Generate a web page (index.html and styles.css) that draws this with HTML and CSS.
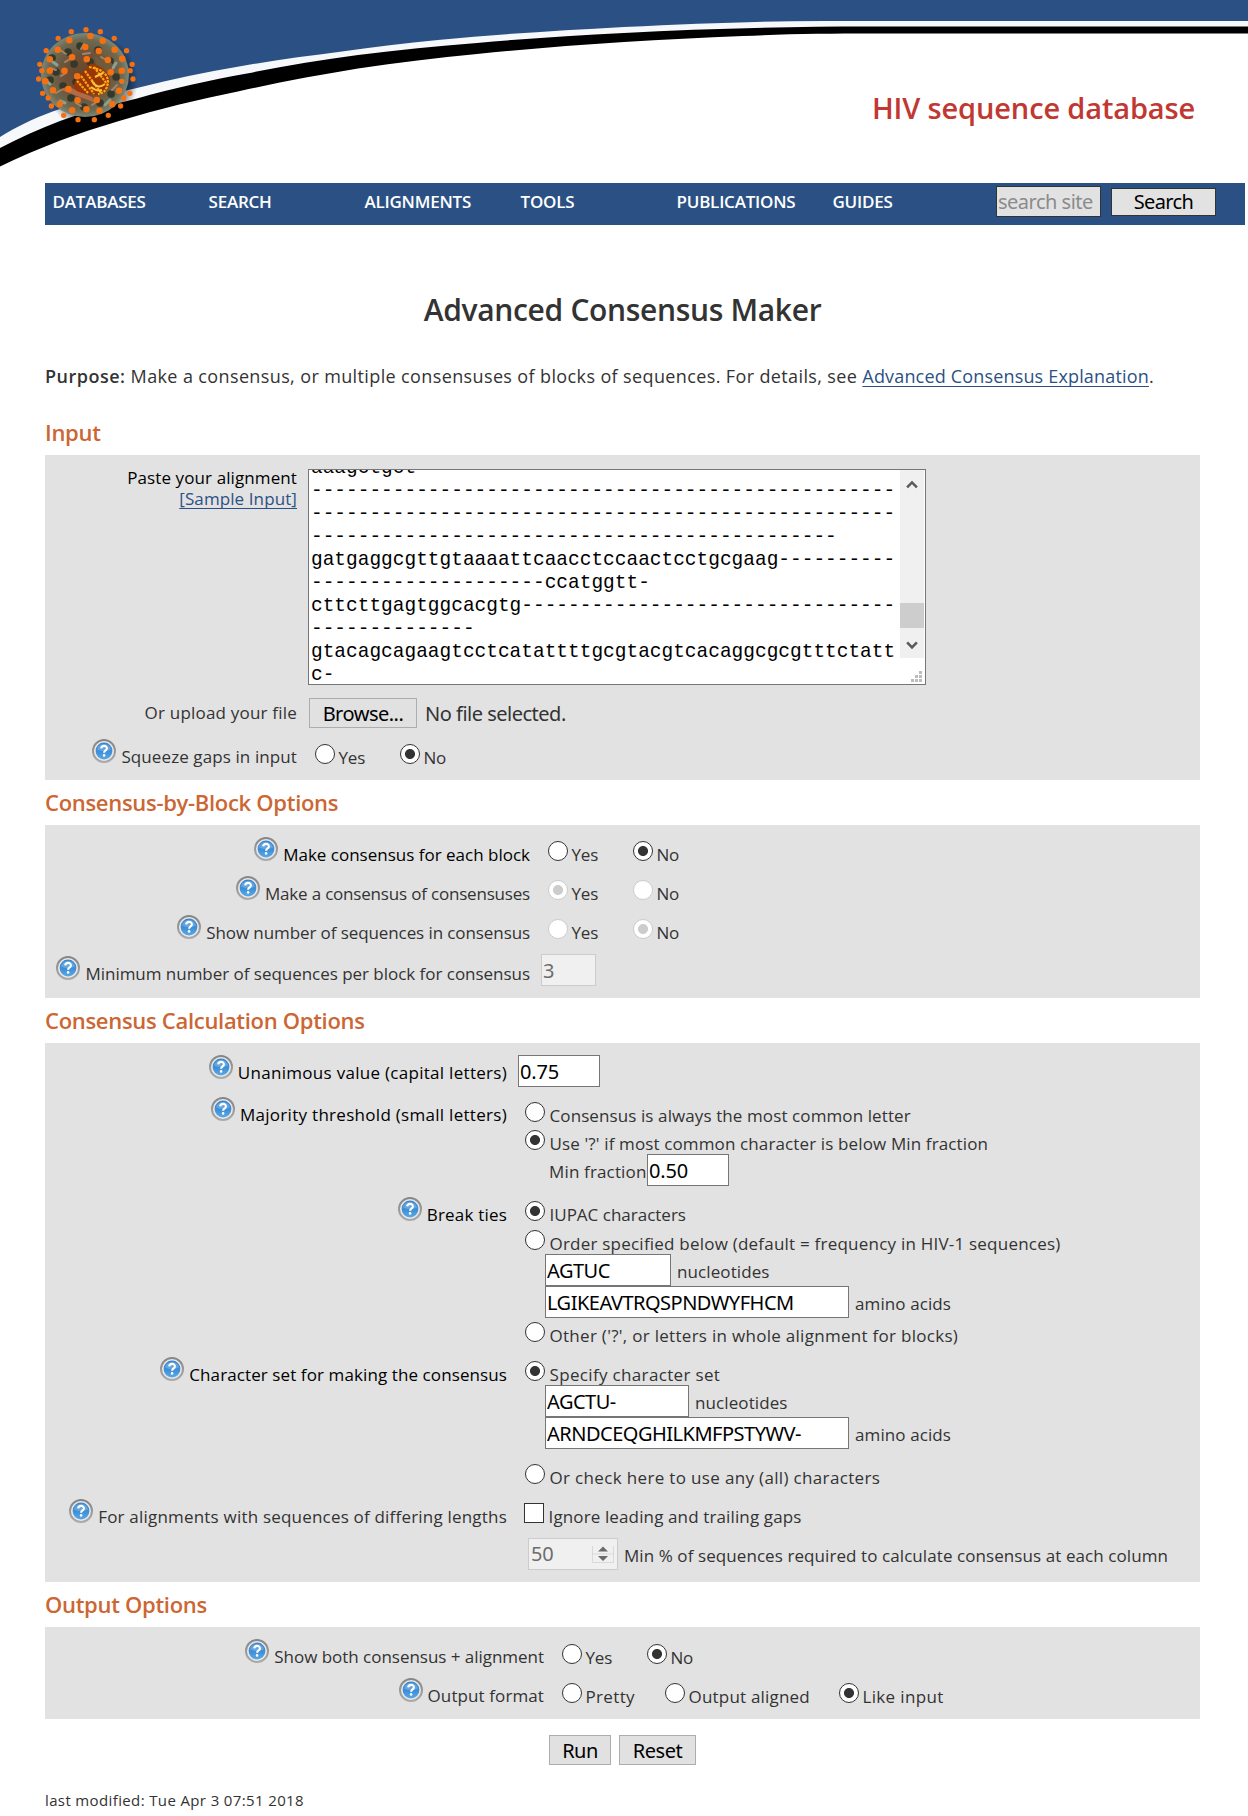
FILE: index.html
```html
<!DOCTYPE html>
<html lang="en">
<head>
<meta charset="utf-8">
<title>Advanced Consensus Maker</title>
<link rel="stylesheet" href="styles.css">
</head>
<body>
<svg class="defs" width="0" height="0" aria-hidden="true">
  <defs>
    <linearGradient id="ring" x1="0" y1="0" x2="0" y2="1"><stop offset="0" stop-color="#868686"/><stop offset="1" stop-color="#aaa"/></linearGradient>
    <linearGradient id="ball" x1="0" y1="0" x2="0" y2="1"><stop offset="0" stop-color="#3a86cc"/><stop offset=".55" stop-color="#3f8fd8"/><stop offset="1" stop-color="#59a9e6"/></linearGradient>
    <symbol id="help" viewBox="0 0 24 24">
      <circle cx="12" cy="12" r="11" fill="#e9e9e9" stroke="url(#ring)" stroke-width="2"/>
      <circle cx="12" cy="12" r="8.4" fill="url(#ball)"/>
      <path d="M5 10.5a7.2 7.2 0 0 1 14 0q-7 3.2-14 0z" fill="#8cc0ec" opacity=".5"/>
      <path d="M9.2 9.4c.2-3.4 5.8-3.3 5.7 0c0 2-2.8 2-2.8 4.4" fill="none" stroke="#fff" stroke-width="2.1"/>
      <circle cx="12.1" cy="16.4" r="1.3" fill="#fff"/>
    </symbol>
  </defs>
</svg>

<header class="banner">
  <svg class="swoosh" width="1248" height="183" viewBox="0 0 1248 183" aria-hidden="true">
    <path fill="#2b5184" d="M0 0H1248V183H0Z"/>
    <path fill="#f6f8fb" d="M0 137C15 127.500 33 118.500 52 111.700C79 102.500 107 95 139 87.500C172 79 205 72 239 66.500C272 60.500 307 56 342 51.500C374 47 405 43 438 40C500 34 560 30.500 624 27C700 23.500 760 21 823 21H1248V183H0Z"/>
    <path fill="#fff" d="M0 150C40 128 90 110 137 100.500C210 82 283 68 358 57C437 48 526 40 624 35C704 30.500 790 28.500 870 28.500H1248V183H0Z"/>
    <path fill="#000" d="M0 148C19 138 39 129 60 121C85 112 110 105 137 98.500C172 88.500 210 80 247 73.500C283 66 320 60 358 55C398 50 437 46 477 43C526 38.500 575 35.500 624 33C704 28.500 790 26.500 870 26.500H1248V33.500H870C830 33.500 785 34 743 36C703 37.500 663 39.500 624 42C575 45 526 49 477 54C437 58 398 62.500 358 68.500C318 75 278 82.500 239 91.300C198 99.500 158 109.500 119 121C78 133 38 148 0 166.500Z"/>
  </svg>
  <svg class="virion" width="110" height="116" viewBox="0 0 110 116" aria-hidden="true">
    <defs>
      <radialGradient id="shade"><stop offset=".8" stop-color="#000" stop-opacity=".4"/><stop offset="1" stop-color="#000" stop-opacity="0"/></radialGradient>
      <radialGradient id="shell"><stop offset="0" stop-color="#6b4428"/><stop offset=".5" stop-color="#6d5138"/><stop offset=".85" stop-color="#6c6a53"/><stop offset="1" stop-color="#7b8878"/></radialGradient>
    </defs>
    <ellipse cx="63" cy="61" rx="47" ry="48" fill="url(#shade)"/>
    <ellipse cx="57" cy="55" rx="44" ry="42" fill="url(#shell)"/>
    <g fill="none" stroke-linecap="round">
      <path d="M24 38h.1M40 32h.1M52 26h.1M70 30h.1M62 42h.1M82 41h.1M28 52h.1M46 44h.1M35 66h.1M43 78h.1M56 87h.1M72 83h.1M83 74h.1M88 57h.1M22 60h.1M48 62h.1" stroke="#33382b" stroke-width="7.500"/>
      <path d="M32 30l6 4M56 24l-3 5M73 37l5 3M22 48l6 2M38 53l-5 3M28 73l7-4M48 83l5 3M64 85l7-5M89 65l-5 5M37 42l5-3M55 34l7-1" stroke="#a08568" stroke-width="2"/>
      <path d="M25 42l4 3M88 43l-3 5M32 81l5 2M77 85l5-5M17 60l5 4" stroke="#8ba092" stroke-width="3"/>
    </g>
    <path d="M66 36L84 43L82 60L68 45Z" fill="#6f5a3c"/>
    <path d="M33 70L68 83L64 77L39 66Z" fill="#b26a48"/>
    <path d="M62 44C68 42 82 52 82 60C82 71 75 76 66 75C57 74 44 72 46 65C48 56 58 51 62 44Z" fill="#9a3506"/>
    <g fill="none" stroke="#fba712" stroke-width="2.200" stroke-dasharray="2.500 1">
      <path d="M61 47Q80 50 80 62Q79 73 70 74M57 51L73 73M53 56L66 74M66 47L79 64M49 61L60 73"/>
    </g>
    <path d="M64 61q5 9 13 3M63 67q6 5 11 3M67 57l8-4" fill="none" stroke="#ffc43a" stroke-width="2"/>
    <g transform="translate(-28 -20) scale(.398 .3333)" fill="none" stroke="#f6700f" stroke-width="6.500" stroke-linecap="round">
      <path vector-effect="non-scaling-stroke" stroke-width="5.300" d="M216 89h.1M179 95h.1M252 95h.1M146 115h.1M287 115h.1M116 152h.1M318 152h.1M100 193h.1M332 193h.1M97 237h.1M334 237h.1M107 280h.1M326 280h.1M129 318h.1M303 318h.1M160 346h.1M272 346h.1M196 359h.1M237 359h.1M105 212h.1M327 212h.1M121 294h.1M311 294h.1M306 244h.1"/>
      <path vector-effect="non-scaling-stroke" d="M174 121h.1M227 108h.1M258 122h.1M145 149h.1M214 141h.1M248 153h.1M288 149h.1M125 178h.1M181 172h.1M218 178h.1M271 180h.1M307 176h.1M125 212h.1M162 212h.1M194 229h.1M278 217h.1M306 212h.1M114 244h.1M172 267h.1M133 271h.1M299 272h.1M195 301h.1M243 300h.1M150 312h.1M282 313h.1M181 331h.1M217 328h.1M250 332h.1"/>
    </g>
  </svg>
  <div class="site">HIV sequence database</div>
</header>

<div class="page">
  <nav class="menu">
    <a>DATABASES</a><a>SEARCH</a><a>ALIGNMENTS</a><a>TOOLS</a><a>PUBLICATIONS</a><a>GUIDES</a>
    <form class="find"><input class="find-box" type="text" placeholder="search site"><button class="find-go" type="button">Search</button></form>
  </nav>

  <main class="content">
    <h1>Advanced Consensus Maker</h1>
    <p class="purpose"><b>Purpose:</b> Make a consensus, or multiple consensuses of blocks of sequences. For details, see <a class="link" href="#">Advanced Consensus Explanation</a>.</p>

    <h2>Input</h2>
    <section class="panel panel-input">
      <div class="row row-paste">
        <div class="paste-label"><span class="req">Paste your alignment</span><a class="link" href="#">[Sample Input]</a></div>
        <div class="controls">
          <div class="area">
            <pre class="seq">aaagctgct
--------------------------------------------------
--------------------------------------------------
---------------------------------------------
gatgaggcgttgtaaaattcaacctccaactcctgcgaag----------
--------------------ccatggtt-
cttcttgagtggcacgtg--------------------------------
--------------
gtacagcagaagtcctcatattttgcgtacgtcacaggcgcgtttctatt
c-</pre>
            <div class="side">
              <div class="bar">
                <svg width="12" height="9" viewBox="0 0 12 9"><path d="M1 7.500L6 2.500L11 7.500" fill="none" stroke="#5a5a5a" stroke-width="2.600"/></svg>
                <div class="thumb"></div>
                <svg width="12" height="9" viewBox="0 0 12 9"><path d="M1 1.500L6 6.500L11 1.500" fill="none" stroke="#5a5a5a" stroke-width="2.600"/></svg>
              </div>
              <svg class="grip" width="11" height="11" viewBox="0 0 11 11"><path d="M0 8h3v3H0zM4 8h3v3H4zM8 8h3v3H8zM4 4h3v3H4zM8 4h3v3H8zM8 0h3v3H8z" fill="#bdbdbd"/></svg>
            </div>
          </div>
        </div>
      </div>
      <div class="row row-file">
        <div class="label"><span class="w1">Or upload your file</span></div>
        <div class="controls file"><button class="btn browse" type="button">Browse...</button><span class="nofile">No file selected.</span></div>
      </div>
      <div class="row low">
        <div class="label"><svg class="help"><use href="#help"/></svg><span>Squeeze gaps in input</span></div>
        <div class="controls opts"><label class="opt pair"><input type="radio" name="squeeze"><span>Yes</span></label><label class="opt"><input type="radio" name="squeeze" checked><span>No</span></label></div>
      </div>
    </section>

    <h2>Consensus-by-Block Options</h2>
    <section class="panel panel-block">
      <div class="row">
        <div class="label req"><svg class="help"><use href="#help"/></svg><span class="n0">Make consensus for each block</span></div>
        <div class="controls opts"><label class="opt pair"><input type="radio" name="each"><span>Yes</span></label><label class="opt"><input type="radio" name="each" checked><span>No</span></label></div>
      </div>
      <div class="row">
        <div class="label"><svg class="help"><use href="#help"/></svg><span class="n2">Make a consensus of consensuses</span></div>
        <div class="controls opts"><label class="opt pair"><input type="radio" name="coc" checked disabled><span>Yes</span></label><label class="opt"><input type="radio" name="coc" disabled><span>No</span></label></div>
      </div>
      <div class="row">
        <div class="label"><svg class="help"><use href="#help"/></svg><span class="n1">Show number of sequences in consensus</span></div>
        <div class="controls opts"><label class="opt pair"><input type="radio" name="num" disabled><span>Yes</span></label><label class="opt"><input type="radio" name="num" checked disabled><span>No</span></label></div>
      </div>
      <div class="row">
        <div class="label drop"><svg class="help"><use href="#help"/></svg><span class="n3">Minimum number of sequences per block for consensus</span></div>
        <div class="controls"><input class="field w-min" type="text" value="3" disabled></div>
      </div>
    </section>

    <h2>Consensus Calculation Options</h2>
    <section class="panel panel-calc">
      <div class="row">
        <div class="label req"><svg class="help"><use href="#help"/></svg><span class="w3">Unanimous value (capital letters)</span></div>
        <div class="controls"><input class="field w-num" type="text" value="0.75"></div>
      </div>
      <div class="row row-majority">
        <div class="label req"><svg class="help"><use href="#help"/></svg><span class="w3">Majority threshold (small letters)</span></div>
        <div class="controls stack">
          <label class="opt"><input type="radio" name="maj"><span>Consensus is always the most common letter</span></label>
          <label class="opt"><input type="radio" name="maj" checked><span class="w0">Use '?' if most common character is below Min fraction</span></label>
          <div class="line minfrac"><span>Min fraction</span><input class="field w-num" type="text" value="0.50"></div>
        </div>
      </div>
      <div class="row row-ties">
        <div class="label req"><svg class="help"><use href="#help"/></svg><span class="w1">Break ties</span></div>
        <div class="controls stack">
          <label class="opt"><input type="radio" name="ties" checked><span class="n0">IUPAC characters</span></label>
          <label class="opt"><input type="radio" name="ties"><span class="w2">Order specified below (default = frequency in HIV-1 sequences)</span></label>
          <div class="pairs">
            <div class="line"><input class="field w-nuc" type="text" value="AGTUC"><span>nucleotides</span></div>
            <div class="line"><input class="field w-aa" type="text" value="LGIKEAVTRQSPNDWYFHCM"><span>amino acids</span></div>
          </div>
          <label class="opt"><input type="radio" name="ties"><span class="w3">Other ('?', or letters in whole alignment for blocks)</span></label>
        </div>
      </div>
      <div class="row row-charset">
        <div class="label req"><svg class="help"><use href="#help"/></svg><span>Character set for making the consensus</span></div>
        <div class="controls stack">
          <label class="opt"><input type="radio" name="set" checked><span class="w4">Specify character set</span></label>
          <div class="pairs">
            <div class="line"><input class="field w-nuc2" type="text" value="AGCTU-"><span>nucleotides</span></div>
            <div class="line"><input class="field w-aa" type="text" value="ARNDCEQGHILKMFPSTYWV-"><span>amino acids</span></div>
          </div>
          <label class="opt any"><input type="radio" name="set"><span class="w4">Or check here to use any (all) characters</span></label>
        </div>
      </div>
      <div class="row row-lengths">
        <div class="label"><svg class="help"><use href="#help"/></svg><span class="w1">For alignments with sequences of differing lengths</span></div>
        <div class="controls stack">
          <label class="opt check"><input type="checkbox"><span class="w0">Ignore leading and trailing gaps</span></label>
          <div class="line percent">
            <div class="spin"><span class="spin-value">50</span><svg width="22" height="20" viewBox="0 0 22 20"><path d="M.5 2V18.500H21.500V2M0 10H22" fill="none" stroke="#d9d9d9"/><path d="M6 7.500L11 2.500L16 7.500ZM6 12L11 17L16 12Z" fill="#6a6a6a"/></svg></div>
            <span class="pct">Min % of sequences required to calculate consensus at each column</span>
          </div>
        </div>
      </div>
    </section>

    <h2>Output Options</h2>
    <section class="panel panel-output">
      <div class="row low">
        <div class="label"><svg class="help"><use href="#help"/></svg><span class="n3">Show both consensus + alignment</span></div>
        <div class="controls opts"><label class="opt pair"><input type="radio" name="both"><span>Yes</span></label><label class="opt"><input type="radio" name="both" checked><span>No</span></label></div>
      </div>
      <div class="row low">
        <div class="label"><svg class="help"><use href="#help"/></svg><span>Output format</span></div>
        <div class="controls opts"><label class="opt pretty"><input type="radio" name="fmt"><span class="w4">Pretty</span></label><label class="opt aligned"><input type="radio" name="fmt"><span class="w1">Output aligned</span></label><label class="opt"><input type="radio" name="fmt" checked><span class="w4">Like input</span></label></div>
      </div>
    </section>

    <div class="actions"><button class="btn run" type="button">Run</button><button class="btn reset" type="button">Reset</button></div>
    <footer class="modified">last modified: Tue Apr 3 07:51 2018</footer>
  </main>
</div>
</body>
</html>
```
FILE: styles.css
```css
* { box-sizing: border-box; }
body {
  margin: 0;
  background: #fff;
  color: #333;
  font-family: "Open Sans", sans-serif;
  font-size: 17px;
  line-height: 24px;
  letter-spacing: .1px;
}
input, button { font-family: "Noto Sans", sans-serif; font-size: 20px; letter-spacing: -.5px; margin: 0; color: #000; }
.defs { position: absolute; }

/* Banner */
.banner { position: relative; height: 183px; padding: 88px 53px 0 0; }
.swoosh { position: absolute; left: 0; top: 0; }
.virion { position: absolute; left: 28px; top: 20px; }
.site { position: relative; text-align: right; color: #c13832; font-size: 29px; font-weight: 600; line-height: 40px; letter-spacing: -.15px; }

/* Menu bar */
.page { padding-left: 45px; }
.menu { display: flex; width: 1200px; height: 42px; padding-left: 7.5px; background: #2b5184; }
.menu a { flex: none; width: 156px; padding-top: 7px; color: #fff; font-weight: 600; letter-spacing: -.22px; white-space: nowrap; }
.find { display: flex; padding: 3px 0 0 7.5px; margin: 0; gap: 10px; }
.find-box { width: 105px; height: 31px; border: 1px solid #333; background: #e2e2e2; padding: 0 1px; }
.find-box::placeholder { color: #8b8b8b; opacity: 1; }
.find-go { width: 105px; height: 28px; margin-top: 2px; border: 1px solid #333; background: #e2e2e2; padding: 0; line-height: 26px; letter-spacing: -.6px; }

/* Text */
.content { width: 1155px; }
h1 { margin: 64px 0 34px; font-size: 30px; font-weight: 600; line-height: 41px; letter-spacing: -.33px; text-align: center; }
.purpose { margin: 0 0 29px; font-size: 18px; letter-spacing: .375px; white-space: nowrap; }
.purpose b { font-weight: 600; letter-spacing: .5px; }
.purpose .link { letter-spacing: .17px; }
.link { color: #2b5184; text-decoration: underline; text-underline-offset: 3px; text-decoration-skip-ink: none; text-decoration-thickness: 1px; }
h2 { margin: 7px 0 8px; color: #cc6633; font-size: 22px; font-weight: 600; line-height: 30px; letter-spacing: -.3px; }
.purpose + h2 { margin-top: 0; }

/* Panels */
.panel { background: #e2e2e2; padding: 12px 0; }
.panel-input { --label: 252px; padding-bottom: 17px; }
.panel-block { --label: 485px; }
.panel-calc { --label: 462px; }
.panel-output { --label: 499px; padding-bottom: 17px; }
.row { display: grid; grid-template-columns: var(--label) 1fr; }
.panel-block .row + .row, .panel-output .row + .row { margin-top: 15px; }
.label { display: flex; justify-content: flex-end; gap: 5px; height: 24px; white-space: nowrap; }
.label span { margin-top: 6px; }
.help { flex: none; width: 24px; height: 24px; }
.req { color: #000; }
.drop { margin-top: 2px; }

/* Tracking steps for labels, wide to narrow */
.w4 { letter-spacing: .34px; }
.w3 { letter-spacing: .29px; }
.w2 { letter-spacing: .22px; }
.w1 { letter-spacing: .2px; }
.w0 { letter-spacing: .13px; }
.n0 { letter-spacing: 0; }
.n3 { letter-spacing: -.03px; }
.n1 { letter-spacing: -.09px; }
.n2 { letter-spacing: -.19px; }
.controls { padding-left: 11px; white-space: nowrap; }

/* Choices */
.opts { display: flex; height: 24px; padding: 4px 0 0 18px; }
.opts span { margin-left: -1px; }
.opts .pair span, .opts .pair + .opt span { letter-spacing: -.2px; }
.low .opts { padding-top: 5px; }
.opt { display: flex; gap: 4.5px; height: 20px; }
.opt span { margin-top: 2px; }
.pair { width: 85px; }
.pretty { width: 103px; }
.aligned { width: 174px; }
input[type=radio], input[type=checkbox] { appearance: none; flex: none; width: 20px; height: 20px; border: 1px solid #333; background: #fff; }
input[type=radio] { border-radius: 50%; }
input[type=radio]:checked { background: radial-gradient(circle, #333 4.6px, #fff 5.4px); }
input[type=radio]:disabled { border-color: #ccc; }
input[type=radio]:checked:disabled { background: radial-gradient(circle, #ccc 4.6px, #fff 5.4px); }

/* Fields */
.field { display: block; flex: none; height: 32px; border: 1px solid #767676; background: #fff; padding: 0 1px; }
.field:disabled { border-color: #ccc; background: #f0f0f0; color: #6d6d6d; }
.w-min { width: 55px; }
.w-num { width: 82px; letter-spacing: -.2px; }
.w-nuc { width: 126px; }
.w-nuc2 { width: 144px; }
.w-aa { width: 304px; }
.stack { display: flex; flex-direction: column; padding: 4px 0 0 18px; }
.line { display: flex; gap: 6px; height: 32px; }
.line > span { margin-top: 6px; }
.pairs { margin: 4px 0 4px 20px; }
.btn { flex: none; height: 30px; padding: 0; border: 1px solid #adadad; background: #e1e1e1; line-height: 28px; text-align: center; }

/* Alignment box */
.paste-label { display: flex; flex-direction: column; align-items: flex-end; line-height: 21px; }
.area { display: flex; justify-content: space-between; width: 618px; height: 216px; margin-top: 2px; border: 1px solid #767676; background: #fff; overflow: hidden; }
.seq { margin: -13px 0 0 2px; color: #000; font: 19.48px/23px "Liberation Mono", monospace; letter-spacing: 0; }
.side { width: 25px; }
.bar { display: flex; flex-direction: column; align-items: center; width: 24px; height: 188px; padding: 10px 0 8px; background: #f0f0f0; }
.thumb { width: 24px; height: 26px; margin: 114px 0 13px; background: #cdcdcd; }
.grip { display: block; margin: 13px 0 0 11px; }
.row-file { height: 30px; margin: 13px 0 11px; }
.row-file .label { margin-top: -3px; }
.file { display: flex; gap: 8px; height: 30px; padding-left: 12px; }
.browse { width: 108px; padding-top: 1px; }
.nofile { font-family: "Noto Sans", sans-serif; font-size: 20px; line-height: 31px; letter-spacing: -.5px; }

/* Calculation rows */
.row-majority { margin: 10px 0 11px; }
.row-majority .stack { padding-top: 5px; gap: 8px; }
.minfrac { gap: 0; margin: -4px 0 0 24px; }
.minfrac > span { width: 98px; letter-spacing: .15px; }
.row-ties .opt + .opt { margin-top: 9px; }
.row-charset, .row-lengths { margin-top: 15px; }
.any { margin-top: 11px; }
.check { margin-left: -1px; }
.percent { margin: 15px 0 0 3px; }
.pct { letter-spacing: .08px; }
.spin { display: flex; align-items: center; justify-content: space-between; width: 90px; height: 32px; border: 1px solid #ccc; background: #f0f0f0; padding: 0 3px 0 2px; color: #6d6d6d; font: 20px/30px "Noto Sans", sans-serif; letter-spacing: -.2px; }

.actions { display: flex; gap: 8px; margin: 16px 0 25px 504px; }
.run { width: 62px; padding-top: 1px; }
.reset { width: 77px; padding-top: 1px; }
.modified { height: 26px; font-size: 15px; line-height: 20px; letter-spacing: .37px; }
```
